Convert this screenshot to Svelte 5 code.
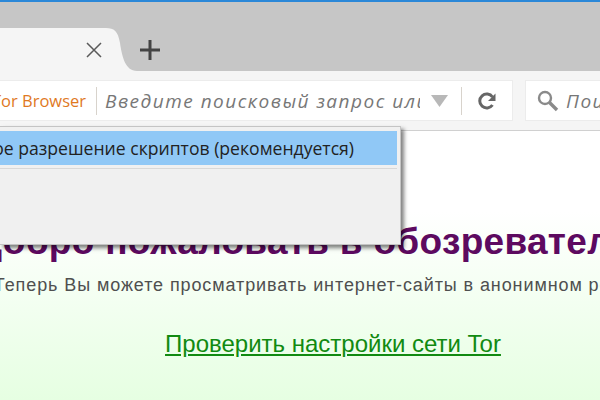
<script>
	const searchHint = 'Введите поисковый запрос или адрес';
</script>

<div class="window">
	<div class="tabbar">
		<div class="tab">
			<svg class="close" width="18" height="18" viewBox="0 0 18 18">
				<path d="M2 2 L16 16 M16 2 L2 16" stroke="#5a5a5a" stroke-width="1.5" fill="none" />
			</svg>
		</div>
		<svg class="tab-curve" width="31" height="43" viewBox="0 0 31 43">
			<path d="M0 0 C8 0 12 3 14 15 C16 28 19 43 31 43 L0 43 Z" fill="#f5f5f5" />
		</svg>
		<svg class="plus" width="20" height="20" viewBox="0 0 20 20">
			<path d="M10 0 V20 M0 10 H20" stroke="#444" stroke-width="3" fill="none" />
		</svg>
	</div>

	<div class="toolbar">
		<div class="urlbar">
			<span class="brand">Tor Browser</span>
			<span class="sep"></span>
			<span class="hint">{searchHint}</span>
			<div class="url-end">
				<svg width="17" height="12" viewBox="0 0 17 12"><path d="M0 0 H17 L8.5 12 Z" fill="#b8b8b8" /></svg>
				<span class="sep tall"></span>
				<svg class="reload" width="20" height="20" viewBox="0 0 20 20">
					<path d="M15.5 6 A7 7 0 1 0 15.5 14" stroke="#666" stroke-width="3" fill="none" />
					<path d="M18.5 2.5 V10 H11 Z" fill="#666" />
				</svg>
			</div>
		</div>
		<div class="searchbar">
			<svg width="24" height="24" viewBox="0 0 24 24">
				<circle cx="9" cy="9" r="6" stroke="#8a8a8a" stroke-width="2.4" fill="none" />
				<path d="M13.5 13.5 L21 21" stroke="#8a8a8a" stroke-width="3.4" />
			</svg>
			<span class="hint">Поиск</span>
		</div>
	</div>

	<div class="page">
		<h1>Добро пожаловать в обозреватель Tor</h1>
		<p>Теперь Вы можете просматривать интернет-сайты в анонимном режиме.</p>
		<a href="#check">Проверить настройки сети Tor</a>
	</div>

	<div class="menu">
		<div class="menu-item"><span>Временное разрешение скриптов (рекомендуется)</span></div>
		<div class="menu-rule"></div>
	</div>
</div>

<style>
	:global(body) {
		margin: 0;
	}

	.window {
		position: relative;
		width: 600px;
		height: 400px;
		overflow: hidden;
		background: #fff;
		font-family: 'Open Sans', 'Noto Sans', sans-serif;
	}

	.tabbar {
		display: flex;
		align-items: flex-end;
		box-sizing: border-box;
		height: 71px;
		background: #c6c6c6;
		border-top: 2px solid #2b88d8;
	}

	.tab {
		display: flex;
		align-items: center;
		justify-content: flex-end;
		box-sizing: border-box;
		width: 106px;
		height: 43px;
		padding-right: 3px;
		background: #f5f5f5;
	}

	.tab-curve {
		display: block;
		margin-right: 3px;
	}

	.plus {
		align-self: flex-end;
		margin-bottom: 11px;
	}

	.toolbar {
		display: flex;
		gap: 12px;
		box-sizing: border-box;
		height: 60px;
		padding: 9px 0 0;
		background: #f5f5f5;
		border-bottom: 1px solid #d0d0d0;
		align-items: flex-start;
	}

	.urlbar {
		display: flex;
		align-items: center;
		flex: 0 0 513px;
		box-sizing: border-box;
		height: 41px;
		background: #fff;
		border: 1px solid #ececec;
		border-left: 0;
		font-size: 16px;
		white-space: nowrap;
		overflow: hidden;
	}

	.brand {
		flex: none;
		width: 91px;
		margin-left: -8px;
		color: #e0791f;
		font-size: 16.5px;
	}

	.sep {
		flex: none;
		width: 1px;
		height: 28px;
		margin: 0 8px 0 13px;
		background: #d8d3cc;
	}

	.hint {
		flex: 1;
		overflow: hidden;
		font-style: italic;
		color: #777;
		font-size: 19px;
		letter-spacing: 1.5px;
	}

	.urlbar .hint {
		flex: 0 0 315px;
	}

	.url-end {
		display: flex;
		align-items: center;
		margin-left: 11px;
	}

	.url-end .sep {
		margin: 0 15px 0 13px;
	}

	.searchbar {
		display: flex;
		align-items: center;
		gap: 6px;
		flex: 1;
		height: 41px;
		box-sizing: border-box;
		padding-left: 10px;
		background: #fff;
		border: 1px solid #ececec;
		border-right: 0;
		white-space: nowrap;
	}

	.page {
		display: flex;
		flex-direction: column;
		align-items: center;
		width: 666px;
		height: 269px;
		background: linear-gradient(#fff 30%, #e6ffe2 100%);
		font-family: 'Liberation Sans', Arial, sans-serif;
		white-space: nowrap;
	}

	h1 {
		margin: 90px 0 0;
		padding-left: 12px;
		font-size: 37px;
		line-height: 42px;
		font-weight: 700;
		letter-spacing: 0.3px;
		color: #5d0a60;
	}

	p {
		margin: 11px 0 0;
		padding-right: 8px;
		font-size: 18px;
		line-height: 22px;
		letter-spacing: 0.9px;
		color: #4f4f4f;
	}

	a {
		margin-top: 33px;
		font-size: 24px;
		line-height: 30px;
		color: #118a11;
	}

	.menu {
		position: absolute;
		left: 0;
		top: 126px;
		box-sizing: border-box;
		width: 401px;
		height: 119px;
		padding: 4px 3px 0 0;
		background: #f0f0f0;
		border: 1px solid #c4c4c4;
		border-left: 0;
		box-shadow: 3px 3px 4px rgba(0, 0, 0, 0.5);
		font-family: 'Open Sans', sans-serif;
		white-space: nowrap;
	}

	.menu-item {
		display: flex;
		justify-content: flex-end;
		box-sizing: border-box;
		height: 34px;
		line-height: 34px;
		background: #90c8f6;
		color: #222;
		font-size: 17.6px;
		padding-right: 43px;
		overflow: hidden;
	}

	.menu-item span {
		flex: none;
	}

	.menu-rule {
		height: 1px;
		margin-top: 3px;
		background: #d8d8d8;
	}
</style>
